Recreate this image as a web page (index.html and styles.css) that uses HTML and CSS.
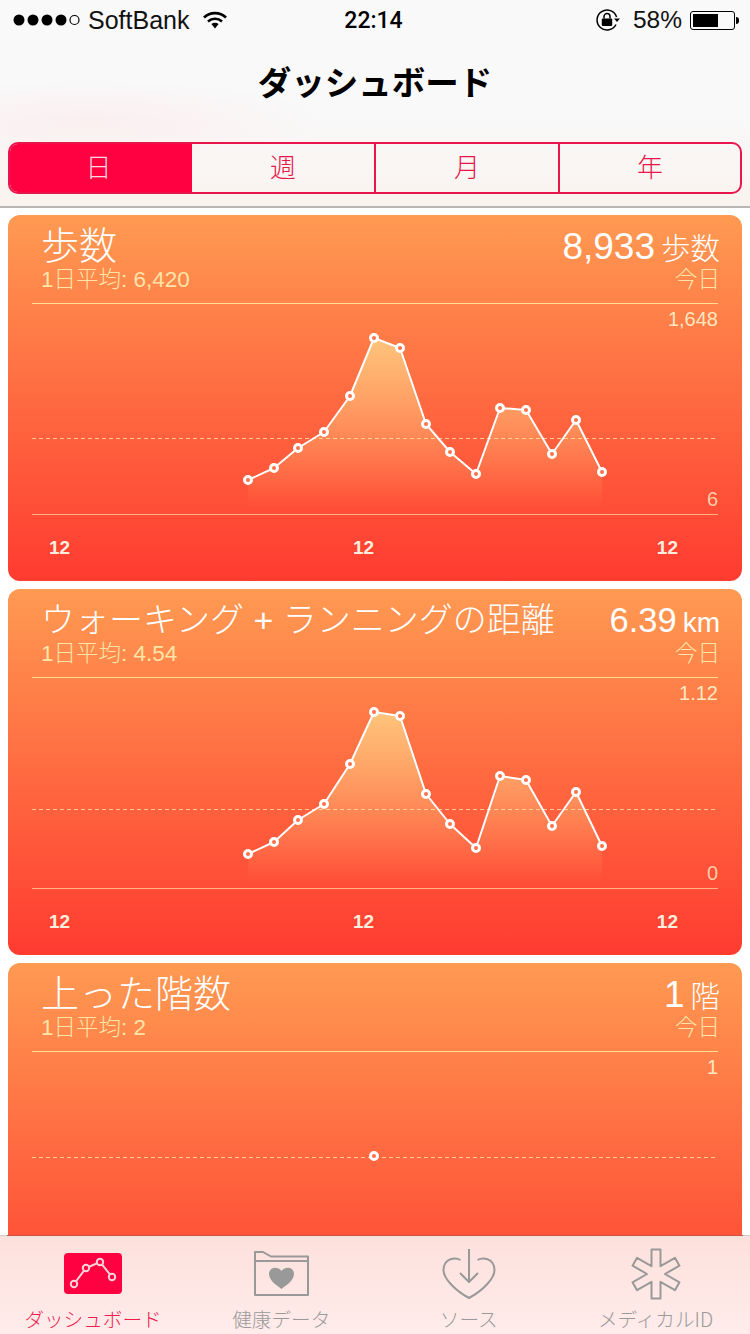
FILE: index.html
```html
<!DOCTYPE html>
<html lang="ja">
<head>
<meta charset="utf-8">
<title>ダッシュボード</title>
<link rel="stylesheet" href="styles.css">
</head>
<body>
<div class="app">
  <header class="top">
    <div class="status">
      <div class="status-left">
        <svg class="dots" width="68" height="14" viewBox="0 0 68 14"><circle cx="6" cy="7" r="5.5"/><circle cx="20" cy="7" r="5.5"/><circle cx="34" cy="7" r="5.5"/><circle cx="48" cy="7" r="5.5"/><circle class="dot-off" cx="61.5" cy="7" r="4.5"/></svg>
        <span class="carrier">SoftBank</span>
        <svg class="wifi" width="26" height="20" viewBox="0 0 26 20"><path class="wifi-arc" d="M2 7.5C8 1.6 18 1.6 24 7.5M6 11.5C10 7.8 16 7.8 20 11.5"/><path d="M9.4 14C11.5 12.3 14.5 12.3 16.6 14L13 18.5Z"/></svg>
      </div>
      <div class="clock">22:14</div>
      <div class="status-right">
        <svg class="rotlock" width="26" height="24" viewBox="0 0 26 24"><path class="rot-arc" d="M21.6 9A10 10 0 1 0 21 16.5"/><path d="M19 10.5h6L22 14Z"/><rect x="6.8" y="10.5" width="10.4" height="7.5" rx="1"/><path class="rot-arc" d="M9 10.5V8.6a3 3 0 0 1 6 0v1.9"/></svg>
        <span class="percent">58%</span>
        <div class="battery"><div class="battery-shell"><div class="battery-level"></div></div><div class="battery-nub"></div></div>
      </div>
    </div>
    <h1 class="title">ダッシュボード</h1>
    <div class="segments">
      <div class="segment is-active">日</div>
      <div class="segment">週</div>
      <div class="segment">月</div>
      <div class="segment">年</div>
    </div>
  </header>

  <main class="list">
    <section class="card">
      <div class="card-head">
        <div class="head-left">
          <div class="card-title">歩数</div>
          <div class="card-sub">1日平均: 6,420</div>
        </div>
        <div class="head-right">
          <div class="card-value"><span class="num">8,933</span><span class="unit">歩数</span></div>
          <div class="card-sub">今日</div>
        </div>
      </div>
      <div class="chart">
        <svg class="plot" viewBox="0 0 686 212" width="686" height="212">
          <defs><linearGradient id="fade1" gradientUnits="userSpaceOnUse" x1="0" y1="35" x2="0" y2="205"><stop offset="0" stop-color="#ffdc8c" stop-opacity=".75"/><stop offset="1" stop-color="#ffdc8c" stop-opacity="0"/></linearGradient></defs>
          <line class="mid" x1="0" y1="135.5" x2="686" y2="135.5"/>
          <polygon class="area area-one" points="216,177 242,165 266,145 292,129 318,93 342,35 368,45 394,121 418,149 444,171 468,105 494,107 520,151 544,117 570,169 570,205 216,205"/>
          <polyline class="curve" points="216,177 242,165 266,145 292,129 318,93 342,35 368,45 394,121 418,149 444,171 468,105 494,107 520,151 544,117 570,169"/>
          <g class="pts"><circle cx="216" cy="177" r="3.5"/><circle cx="242" cy="165" r="3.5"/><circle cx="266" cy="145" r="3.5"/><circle cx="292" cy="129" r="3.5"/><circle cx="318" cy="93" r="3.5"/><circle cx="342" cy="35" r="3.5"/><circle cx="368" cy="45" r="3.5"/><circle cx="394" cy="121" r="3.5"/><circle cx="418" cy="149" r="3.5"/><circle cx="444" cy="171" r="3.5"/><circle cx="468" cy="105" r="3.5"/><circle cx="494" cy="107" r="3.5"/><circle cx="520" cy="151" r="3.5"/><circle cx="544" cy="117" r="3.5"/><circle cx="570" cy="169" r="3.5"/></g>
        </svg>
        <span class="y-label y-max">1,648</span>
        <span class="y-label y-min">6</span>
      </div>
      <div class="x-axis"><span>12</span><span>12</span><span>12</span></div>
    </section>

    <section class="card">
      <div class="card-head">
        <div class="head-left">
          <div class="card-title card-title-long">ウォーキング + ランニングの距離</div>
          <div class="card-sub">1日平均: 4.54</div>
        </div>
        <div class="head-right">
          <div class="card-value"><span class="num num-small">6.39</span><span class="unit unit-latin">km</span></div>
          <div class="card-sub">今日</div>
        </div>
      </div>
      <div class="chart">
        <svg class="plot" viewBox="0 0 686 212" width="686" height="212">
          <defs><linearGradient id="fade2" gradientUnits="userSpaceOnUse" x1="0" y1="35" x2="0" y2="205"><stop offset="0" stop-color="#ffdc8c" stop-opacity=".75"/><stop offset="1" stop-color="#ffdc8c" stop-opacity="0"/></linearGradient></defs>
          <line class="mid" x1="0" y1="132.5" x2="686" y2="132.5"/>
          <polygon class="area area-two" points="216,177 242,165 266,143 292,127 318,87 342,35 368,39 394,117 418,147 444,171 468,99 494,103 520,149 544,115 570,169 570,205 216,205"/>
          <polyline class="curve" points="216,177 242,165 266,143 292,127 318,87 342,35 368,39 394,117 418,147 444,171 468,99 494,103 520,149 544,115 570,169"/>
          <g class="pts"><circle cx="216" cy="177" r="3.5"/><circle cx="242" cy="165" r="3.5"/><circle cx="266" cy="143" r="3.5"/><circle cx="292" cy="127" r="3.5"/><circle cx="318" cy="87" r="3.5"/><circle cx="342" cy="35" r="3.5"/><circle cx="368" cy="39" r="3.5"/><circle cx="394" cy="117" r="3.5"/><circle cx="418" cy="147" r="3.5"/><circle cx="444" cy="171" r="3.5"/><circle cx="468" cy="99" r="3.5"/><circle cx="494" cy="103" r="3.5"/><circle cx="520" cy="149" r="3.5"/><circle cx="544" cy="115" r="3.5"/><circle cx="570" cy="169" r="3.5"/></g>
        </svg>
        <span class="y-label y-max">1.12</span>
        <span class="y-label y-min">0</span>
      </div>
      <div class="x-axis"><span>12</span><span>12</span><span>12</span></div>
    </section>

    <section class="card">
      <div class="card-head">
        <div class="head-left">
          <div class="card-title">上った階数</div>
          <div class="card-sub">1日平均: 2</div>
        </div>
        <div class="head-right">
          <div class="card-value"><span class="num">1</span><span class="unit">階</span></div>
          <div class="card-sub">今日</div>
        </div>
      </div>
      <div class="chart">
        <svg class="plot" viewBox="0 0 686 212" width="686" height="212">
          <line class="mid" x1="0" y1="106.5" x2="686" y2="106.5"/>
          <g class="pts"><circle cx="342" cy="105" r="3.5"/></g>
        </svg>
        <span class="y-label y-max">1</span>
      </div>
    </section>
  </main>

  <nav class="tabs">
    <div class="tab is-current">
      <svg class="tab-icon" width="58" height="52" viewBox="0 0 58 52"><rect class="dash-bg" x="0" y="5" width="58" height="41" rx="4"/><polyline class="dash-line" points="10,36 22,20 36,14 48,29"/><g class="dash-pts"><circle cx="10" cy="36" r="3.2"/><circle cx="22" cy="20" r="3.2"/><circle cx="36" cy="14" r="3.2"/><circle cx="48" cy="29" r="3.2"/></g></svg>
      <span class="tab-label">ダッシュボード</span>
    </div>
    <div class="tab">
      <svg class="tab-icon" width="57" height="52" viewBox="0 0 57 52"><path class="tab-stroke" d="M2 4H10L18 8.500H55V47H2ZM2 13H55"/><path class="tab-fill" d="M28.500 41C24 37.500 16 32.500 16 26C16 22 19 19.800 22 19.800C25 19.800 27.500 21.200 28.500 23C29.500 21.200 32 19.800 35 19.800C38 19.800 41 22 41 26C41 32.500 33 37.500 28.500 41Z"/></svg>
      <span class="tab-label">健康データ</span>
    </div>
    <div class="tab">
      <svg class="tab-icon" width="54" height="52" viewBox="0 0 54 52"><path class="tab-stroke" d="M18.500 12C14 9.500 2 9 1.500 22C1.500 31 14 43 27 50C40 43 52.500 31 52.500 22C52 9 40 9.500 35.500 12M27 1V34M18 25L27 34L36 25"/></svg>
      <span class="tab-label">ソース</span>
    </div>
    <div class="tab">
      <svg class="tab-icon" width="50" height="52" viewBox="-25 -26 50 52"><polygon class="tab-stroke" points="-4.500,-24.500 4.500,-24.500 4.500,-7.790 18.970,-16.150 23.470,-8.350 9,0 23.470,8.350 18.970,16.150 4.500,7.790 4.500,24.500 -4.500,24.500 -4.500,7.790 -18.970,16.150 -23.470,8.350 -9,0 -23.470,-8.350 -18.970,-16.150 -4.500,-7.790"/></svg>
      <span class="tab-label">メディカルID</span>
    </div>
  </nav>
</div>
</body>
</html>
```
FILE: styles.css
```css
* { box-sizing: border-box; }

html, body {
  margin: 0;
  padding: 0;
  background: #fff;
}

body {
  font-family: "Liberation Sans", "Noto Sans CJK JP", sans-serif;
  color: #000;
}

.app {
  display: flex;
  flex-direction: column;
  width: 750px;
  height: 1334px;
  overflow: hidden;
}

/* Top bar */
.top {
  flex: none;
  height: 208px;
  padding-bottom: 13px;
  border-bottom: 2px solid #b9b7b6;
  background:
    radial-gradient(ellipse 240px 40px at 90px 120px, rgba(255, 215, 220, .3), rgba(255, 215, 220, 0)),
    linear-gradient(#f9f9f9 55%, #f9f3ef);
}

.status {
  display: grid;
  grid-template-columns: 1fr auto 1fr;
  align-items: center;
  height: 40px;
  padding: 0 11px 0 13px;
  font-size: 24px;
}

.status-left,
.status-right {
  display: flex;
  align-items: center;
}

.status-right { justify-content: flex-end; }

.dots { fill: #000; }
.dots .dot-off { fill: none; stroke: #000; stroke-width: 1.2; }

.carrier {
  margin-left: 7px;
  font-size: 25px;
  color: #111;
}

.wifi { margin-left: 13px; fill: #000; }
.wifi-arc { fill: none; stroke: #000; stroke-width: 2.600; }

.clock {
  margin-right: 5px;
  font-family: Roboto, sans-serif;
  font-size: 23px;
  font-weight: 500;
}

.rotlock { fill: #000; margin-right: 12px; }
.rot-arc { fill: none; stroke: #000; stroke-width: 1.500; }

.percent {
  font-size: 24.500px;
  color: #111;
}

.battery {
  display: flex;
  align-items: center;
  margin-left: 8px;
}

.battery-shell {
  width: 45px;
  height: 19px;
  padding: 2px;
  border: 1px solid #000;
  border-radius: 3px;
}

.battery-level {
  width: 25px;
  height: 100%;
  background: #000;
}

.battery-nub {
  width: 3px;
  height: 7px;
  margin-left: 1px;
  background: #000;
  border-radius: 0 3px 3px 0;
}

.title {
  display: flex;
  align-items: center;
  justify-content: center;
  height: 102px;
  margin: 0;
  padding-bottom: 22px;
  font-family: "Noto Sans CJK JP", sans-serif;
  font-size: 33.500px;
  font-weight: 700;
}

.segments {
  display: grid;
  grid-template-columns: 182px 184px 184px 180px;
  height: 52px;
  margin: 0 8px;
  border: 2px solid #e8164a;
  border-radius: 10px;
  overflow: hidden;
}

.segment {
  display: flex;
  align-items: center;
  justify-content: center;
  padding-bottom: 5px;
  font-family: "Noto Sans CJK JP", sans-serif;
  font-size: 26px;
  font-weight: 300;
  color: #e8164a;
  border-right: 2px solid #e8164a;
}

.segment:last-child { border-right: 0; }

.segment.is-active {
  padding-right: 5px;
  border-right: 0;
  background: #ff0040;
  color: #ffd9e2;
}

/* Cards */
.list {
  flex: 1;
  min-height: 0;
  display: flex;
  flex-direction: column;
  gap: 8px;
  padding: 7px 8px 0;
  overflow: hidden;
}

.card {
  flex: none;
  height: 366px;
  border-radius: 12px;
  color: #fff;
  background: linear-gradient(#ff9a52, #ff3b30);
}

.card-head {
  display: flex;
  justify-content: space-between;
  height: 88px;
  padding: 11px 22px 0 33px;
}

.head-right { text-align: right; }

.card-title {
  font-size: 38px;
  font-weight: 300;
  line-height: 41px;
  white-space: nowrap;
}

.card-title-long {
  font-size: 34px;
}

.card-sub {
  font-size: 22.500px;
  font-weight: 300;
  line-height: 26px;
  color: #ffe4a8;
  white-space: nowrap;
}

.card-value {
  display: flex;
  align-items: baseline;
  justify-content: flex-end;
  gap: 6px;
  height: 41px;
  line-height: 41px;
}

.num {
  font-size: 37px;
  font-weight: 300;
}

.num-small { font-size: 34.500px; }

.unit {
  font-size: 29.500px;
  font-weight: 300;
}

.unit-latin { font-size: 28px; }

.chart {
  position: relative;
  height: 212px;
  margin: 0 24px;
  border-top: 1px solid #ffdf94;
  border-bottom: 1px solid rgba(255, 224, 170, .7);
}

.plot {
  display: block;
  position: absolute;
  top: -1px;
  left: 0;
  overflow: visible;
}

.mid {
  stroke: rgba(255, 228, 170, .8);
  stroke-width: 1;
  stroke-dasharray: 4 3;
}

.area-one { fill: url("#fade1"); }
.area-two { fill: url("#fade2"); }

.curve {
  fill: none;
  stroke: #fff;
  stroke-width: 2;
  stroke-linejoin: round;
}

.pts circle {
  fill: #ff7048;
  stroke: #fff;
  stroke-width: 3;
}

.y-label {
  position: absolute;
  right: 0;
  font-size: 20px;
  font-weight: 300;
  line-height: 20px;
  color: #ffe7c0;
}

.y-max { top: 5px; }
.y-min { bottom: 5px; color: rgba(255, 225, 190, .85); }

.x-axis {
  display: flex;
  justify-content: space-between;
  padding: 22px 64px 0 41px;
  font-size: 19px;
  font-weight: 700;
  line-height: 22px;
  color: #ffeedd;
}

/* Tab bar */
.tabs {
  flex: none;
  display: grid;
  grid-template-columns: repeat(4, 1fr);
  height: 99px;
  padding-top: 12px;
  border-top: 1px solid;
  border-image: linear-gradient(to right, #ccc 8px, #c5553f 8px, #c5553f 742px, #ccc 742px) 1;
  background: linear-gradient(#fde0dc, #ffeceb);
}

.tab {
  display: flex;
  flex-direction: column;
  align-items: center;
  gap: 7px;
}

.tab:first-child,
.tab:last-child { padding-right: 1.500px; }

.tab-icon { display: block; }

.tab-label {
  font-family: "Noto Sans CJK JP", sans-serif;
  font-size: 19.600px;
  font-weight: 300;
  line-height: 24px;
  color: #9a9a9a;
  white-space: nowrap;
}

.is-current .tab-label { color: #f01a4e; }

.tab-stroke {
  fill: none;
  stroke: #999;
  stroke-width: 2;
  stroke-linejoin: round;
}

.tab-fill { fill: #999; }
.dash-bg { fill: #ff0040; }

.dash-line {
  fill: none;
  stroke: #ffd3da;
  stroke-width: 2;
}

.dash-pts circle {
  fill: #ff0040;
  stroke: #ffd3da;
  stroke-width: 2;
}
```
